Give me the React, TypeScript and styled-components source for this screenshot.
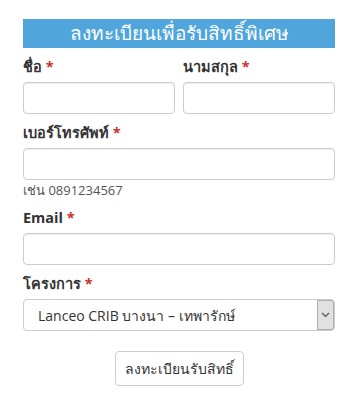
import styled, { createGlobalStyle } from "styled-components";

const Global = createGlobalStyle`
  body {
    margin: 0;
    background: #fff;
    font-family: "Open Sans", "Noto Sans", "Liberation Sans", sans-serif;
    color: #333;
  }
`;

export default function App() {
  return (
    <>
      <Global />
      <Styled className="RegForm-root">
        <Title>ลงทะเบียนเพื่อรับสิทธิ์พิเศษ</Title>
        <Row>
          <Group>
            <Label>
              ชื่อ <Req>*</Req>
            </Label>
            <Input type="text" />
          </Group>
          <Group>
            <Label>
              นามสกุล <Req>*</Req>
            </Label>
            <Input type="text" />
          </Group>
        </Row>
        <Group>
          <Label>
            เบอร์โทรศัพท์ <Req>*</Req>
          </Label>
          <Input type="tel" />
          <Hint>เช่น 0891234567</Hint>
        </Group>
        <Group>
          <Label>
            Email <Req>*</Req>
          </Label>
          <Input type="email" />
        </Group>
        <Group>
          <Label>
            โครงการ <Req>*</Req>
          </Label>
          <SelectWrap>
            <Select defaultValue="crib">
              <option value="crib">Lanceo CRIB บางนา – เทพารักษ์</option>
            </Select>
            <Arrow>
              <svg width="9" height="6" viewBox="0 0 9 6">
                <path d="M1 1l3.5 3.5L8 1" fill="none" stroke="#555" strokeWidth="1.2" />
              </svg>
            </Arrow>
          </SelectWrap>
        </Group>
        <BtnRow>
          <SubmitBtn type="button">ลงทะเบียนรับสิทธิ์</SubmitBtn>
        </BtnRow>
      </Styled>
    </>
  );
}

const Styled = styled.div`
  width: 312px;
  margin: 19px 0 0 23px;
`;

const Title = styled.div`
  height: 29px;
  background: #4fa5dc;
  color: #fff;
  font-size: 19px;
  line-height: 29px;
  text-align: center;
  margin-bottom: 9px;
`;

const Row = styled.div`
  display: grid;
  grid-template-columns: 1fr 1fr;
  column-gap: 8px;
`;

const Group = styled.div`
  margin-bottom: 9px;
`;

const Label = styled.label`
  display: block;
  height: 20px;
  line-height: 20px;
  margin-bottom: 5px;
  font-size: 14.5px;
  font-weight: 700;
  color: #333;
`;

const Req = styled.span`
  color: #c9302c;
`;

const Input = styled.input`
  display: block;
  box-sizing: border-box;
  width: 100%;
  height: 32px;
  border: 1px solid #ccc;
  border-radius: 4px;
  background: #fff;
  box-shadow: inset 0 1px 1px rgba(0, 0, 0, 0.075);
  padding: 0 12px;
  font-family: inherit;
  font-size: 14px;
`;

const Hint = styled.div`
  margin-top: 2px;
  font-size: 13px;
  line-height: 17px;
  color: #555;
`;

const SelectWrap = styled.div`
  position: relative;
  height: 32px;
`;

const Select = styled.select`
  display: block;
  box-sizing: border-box;
  width: 100%;
  height: 32px;
  appearance: none;
  border: 1px solid #ccc;
  border-radius: 4px;
  background: #fff;
  padding: 0 24px 0 14px;
  font-family: inherit;
  font-size: 14px;
  color: #333;
`;

const Arrow = styled.span`
  position: absolute;
  top: 1px;
  right: 1px;
  bottom: 1px;
  width: 17px;
  box-sizing: border-box;
  display: flex;
  align-items: center;
  justify-content: center;
  background: #e1e1e1;
  border: 1px solid #adadad;
  border-radius: 0 3px 3px 0;
  pointer-events: none;
`;

const BtnRow = styled.div`
  display: flex;
  justify-content: center;
  padding-top: 11px;
`;

const SubmitBtn = styled.button`
  width: 129px;
  height: 35px;
  border: 1px solid #ccc;
  border-radius: 4px;
  background: #fff;
  color: #333;
  font-family: inherit;
  font-size: 14px;
`;
